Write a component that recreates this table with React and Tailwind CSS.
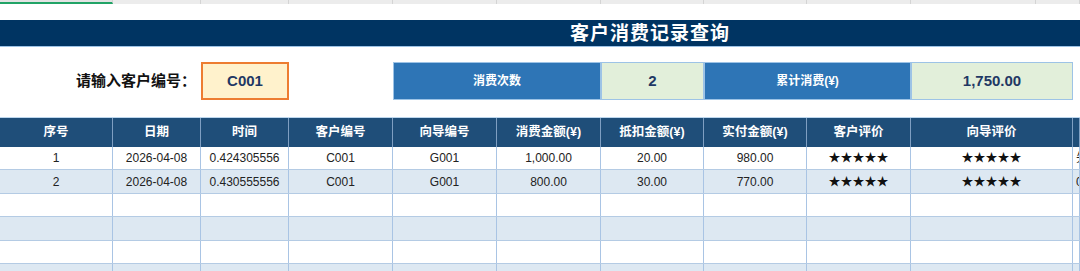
const COLS = 'grid grid-cols-[113px_88px_88px_104px_104px_104px_103px_103px_104px_162px_7px]';

const headers = ['序号', '日期', '时间', '客户编号', '向导编号', '消费金额(¥)', '抵扣金额(¥)', '实付金额(¥)', '客户评价', '向导评价', ''];

const rows = [
  ['1', '2026-04-08', '0.424305556', 'C001', 'G001', '1,000.00', '20.00', '980.00', '★★★★★', '★★★★★', '先'],
  ['2', '2026-04-08', '0.430555556', 'C001', 'G001', '800.00', '30.00', '770.00', '★★★★★', '★★★★★', '0'],
  [], [], [], [],
];

const rowHeights = ['h-[23px]', 'h-[24px]', 'h-[23px]', 'h-[24px]', 'h-[23px]', 'h-[24px]'];

const topSeps = [113, 88, 88, 104, 104, 104, 103, 103, 104, 125, 44];

export default function App() {
  return (
    <div className="w-[1080px] h-[271px] overflow-hidden bg-white font-['Liberation_Sans','Noto_Sans_CJK_SC',sans-serif] text-[#222]">
      {/* spreadsheet column strip */}
      <div className="flex h-[4px] bg-[#ececec]">
        {topSeps.map((w, i) => (
          <div
            key={i}
            style={{ width: w }}
            className={`h-full border-r border-[#d4d4d4] ${i === 0 ? 'border-b-2 border-b-[#21a366] bg-[#e3e3e3]' : ''}`}
          />
        ))}
      </div>

      <div className="h-[16px]" />

      {/* title bar */}
      <div className="h-[27px] bg-[#003462] border-b border-[#9dc3e6] flex items-center pl-[570px]">
        <span className="text-white font-bold text-[19px] tracking-[1px] font-['Liberation_Serif','Noto_Sans_CJK_SC',serif] leading-none">
          客户消费记录查询
        </span>
      </div>

      <div className="h-[15px]" />

      {/* search row */}
      <div className={`${COLS} h-[38px]`}>
        <div className="col-span-2 flex items-center justify-end pr-[5px] font-bold text-[15px] text-[#111]">
          请输入客户编号：
        </div>
        <div className="bg-[#fff2cc] border-2 border-[#ed7d31] flex items-center justify-center font-bold text-[15px] text-[#1f3864]">
          C001
        </div>
        <div />
        <div className="col-span-2 bg-[#2e75b6] border border-[#9dc3e6] flex items-center justify-center text-white font-bold text-[12px]">
          消费次数
        </div>
        <div className="bg-[#e2efda] border border-[#9dc3e6] flex items-center justify-center font-bold text-[15px] text-[#1f3864]">
          2
        </div>
        <div className="col-span-2 bg-[#2e75b6] border border-[#9dc3e6] flex items-center justify-center text-white font-bold text-[12px]">
          累计消费(¥)
        </div>
        <div className="bg-[#e2efda] border border-[#9dc3e6] flex items-center justify-center font-bold text-[15px] text-[#1f3864]">
          1,750.00
        </div>
        <div />
      </div>

      <div className="h-[17px]" />

      {/* table header */}
      <div className={`${COLS} h-[30px] bg-[#1f4e79] border-t border-[#bdd7ee]`}>
        {headers.map((h, i) => (
          <div
            key={i}
            className="border-r border-[#7f9fc2] flex items-center justify-center text-white font-bold text-[12.5px] whitespace-nowrap"
          >
            {h}
          </div>
        ))}
      </div>

      {/* table body */}
      {rows.map((r, ri) => (
        <div
          key={ri}
          className={`${COLS} ${rowHeights[ri]} border-b border-[#b4cbe4] ${ri % 2 === 1 ? 'bg-[#dde8f2]' : 'bg-white'}`}
        >
          {headers.map((_, ci) => (
            <div
              key={ci}
              className={`border-r border-[#a9c4e4] flex items-center overflow-hidden whitespace-nowrap ${
                ci === 10 ? 'justify-start pl-[3px]' : 'justify-center'
              } ${ci === 8 || ci === 9 ? 'text-[#111] text-[12px]' : 'text-[12px]'}`}
            >
              {r[ci] || ''}
            </div>
          ))}
        </div>
      ))}
    </div>
  );
}
